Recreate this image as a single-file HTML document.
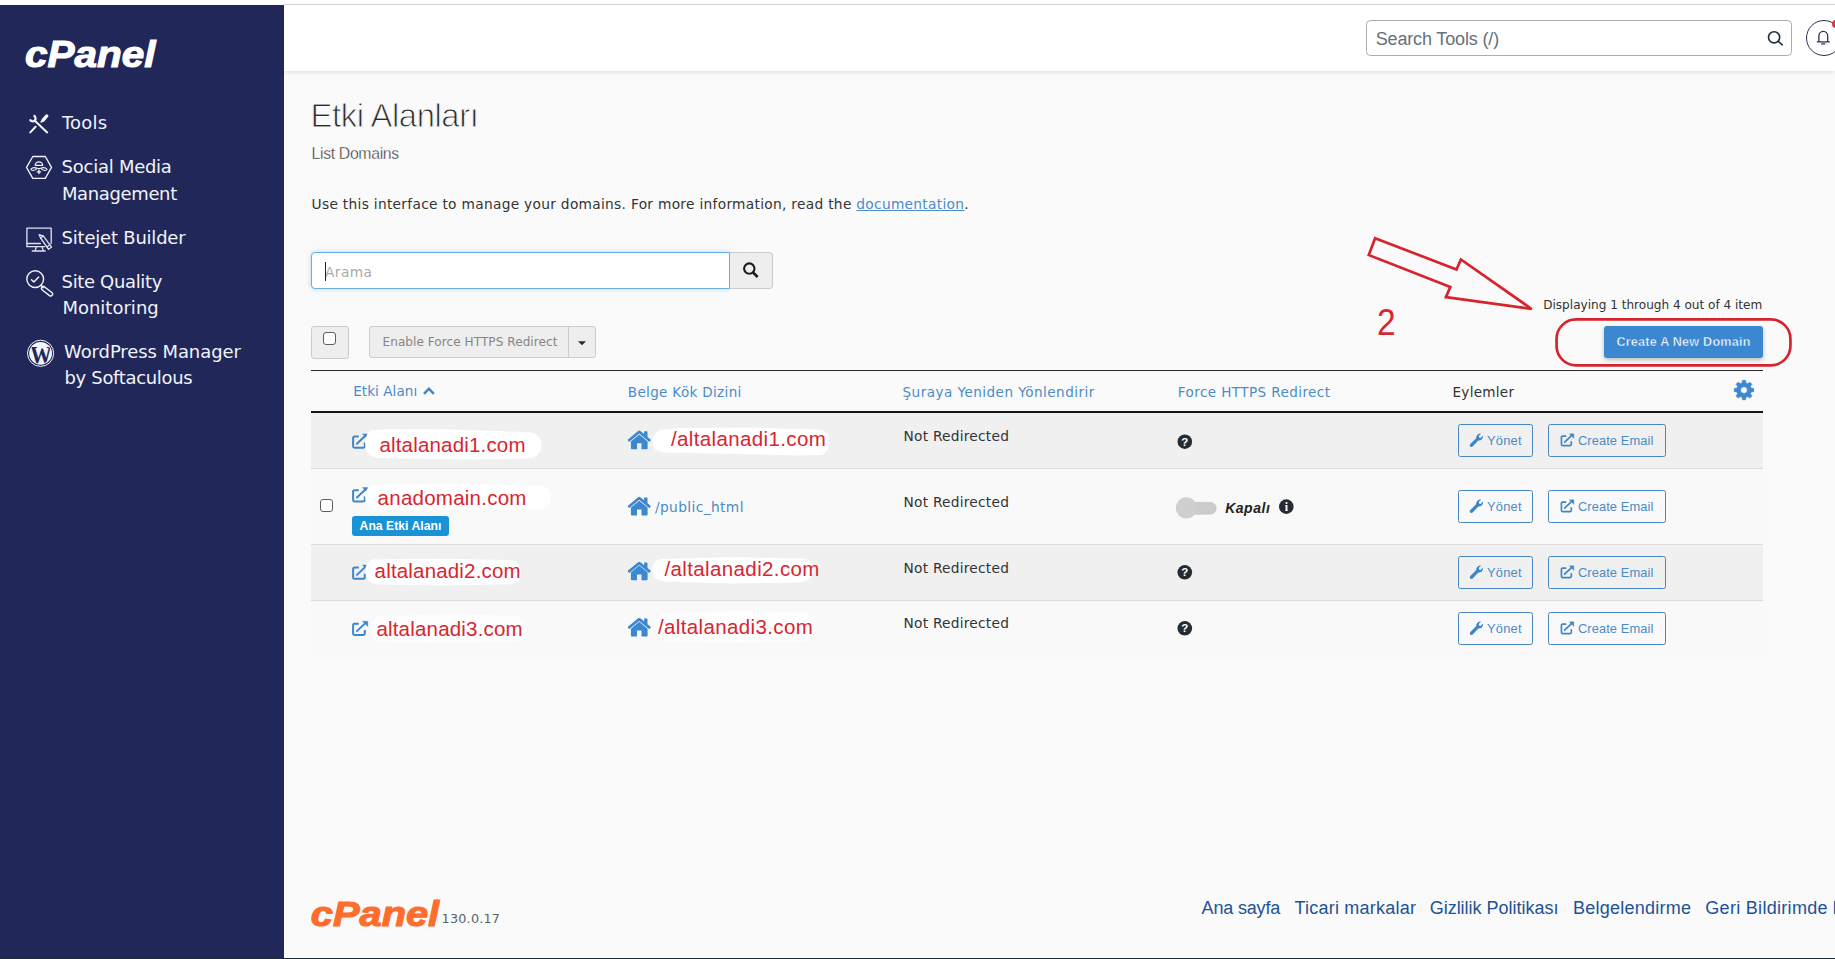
<!DOCTYPE html>
<html lang="tr">
<head>
<meta charset="utf-8">
<title>Etki Alanları - cPanel</title>
<style>
html,body{margin:0;padding:0;}
body{width:1835px;height:959px;overflow:hidden;position:relative;background:#fafafa;font-family:"Liberation Sans",sans-serif;}
.abs,.t,svg.i{position:absolute;}
.t{margin:0;line-height:1;white-space:pre;}
#topstrip{left:0;top:0;width:1835px;height:4px;background:#fff;}
#topline{left:284px;top:4px;width:1551px;height:1px;background:#d9d9d9;}
#sidebar{left:0;top:5px;width:284px;height:954px;background:#212859;}
#header{left:284px;top:5px;width:1551px;height:66px;background:#fff;box-shadow:0 1px 4px rgba(0,0,0,.13);}
#searchtools{left:1366px;top:20px;width:424px;height:34px;border:1px solid #a9acb1;border-radius:4.5px;background:#fff;}
#bell{left:1806px;top:20px;width:34px;height:34px;border:1.3px solid #2a2f55;border-radius:50%;}
#reddot{left:1832.3px;top:20.3px;width:8px;height:8px;border-radius:50%;background:#e0344a;}
#q{left:311px;top:252px;width:417px;height:35px;border:1px solid #66afe9;border-radius:4px 0 0 4px;background:#fff;box-shadow:0 0 5px rgba(102,175,233,.45);}
#caret{left:325px;top:262px;width:1px;height:19px;background:#222;}
#qbtn{left:730px;top:252px;width:42px;height:35px;border:1px solid #ccc;border-left:0;border-radius:0 4px 4px 0;background:#eee;}
#cbbtn{left:311px;top:326px;width:36px;height:31px;border:1px solid #ccc;border-radius:3px;background:#eee;}
.cb{width:11px;height:11px;border:1.2px solid #5f5f5f;border-radius:3px;background:#fff;}
#enbtn{left:369px;top:326px;width:225px;height:30px;border:1px solid #ccc;border-radius:3px;background:#eee;}
#endiv{left:568px;top:327px;width:1px;height:30px;background:#ccc;}
#crbtn{left:1604px;top:326.2px;width:159px;height:31.4px;border-radius:3px;background:#3b87d0;box-shadow:0 2px 4px rgba(0,0,0,.25);}
#ttop{left:311px;top:370px;width:1452px;height:1px;background:#2a2a2a;}
#thbot{left:311px;top:411px;width:1452px;height:2px;background:#141414;}
.row{left:311px;width:1452px;}
.sep{left:311px;width:1452px;height:1px;background:#dcdcdc;}
.btn{height:31px;border:1px solid #4686c6;border-radius:2.5px;}
#badge{left:352px;top:516px;width:97px;height:20px;border-radius:3px;background:#1a92d6;}
#botline{left:0;top:958px;width:1835px;height:1px;background:#1e2b3a;}
a.doc{color:#4a8cc7;text-decoration:underline;}
</style>
</head>
<body>
<div class="abs" id="topstrip"></div>
<div class="abs" id="topline"></div>
<div class="abs" id="header"></div>
<div class="abs" id="sidebar"></div>
<div class="abs" id="searchtools"></div>
<div class="abs" id="bell"></div>
<div class="abs" id="reddot"></div>

<div class="abs" id="q"></div>
<div class="abs" id="qbtn"></div>
<div class="abs" id="cbbtn"></div>
<div class="abs cb" style="left:323px;top:332px"></div>
<div class="abs" id="enbtn"></div>
<div class="abs" id="endiv"></div>
<div class="abs" id="crbtn"></div>

<div class="abs" id="ttop"></div>
<div class="abs" id="thbot"></div>
<div class="abs row" style="top:413px;height:55px;background:#f0f0f0"></div>
<div class="abs sep" style="top:468px"></div>
<div class="abs row" style="top:469px;height:75px;background:#f9f9f9"></div>
<div class="abs sep" style="top:544px"></div>
<div class="abs row" style="top:545px;height:55px;background:#f0f0f0"></div>
<div class="abs sep" style="top:600px"></div>
<div class="abs row" style="top:601px;height:55px;background:#f9f9f9"></div>


<div class="abs cb" style="left:319.5px;top:499px"></div>
<div class="abs" id="badge"></div>

<div class="abs btn" style="left:1458px;top:424px;width:73px"></div>
<div class="abs btn" style="left:1548px;top:424px;width:116px"></div>
<div class="abs btn" style="left:1458px;top:490px;width:73px"></div>
<div class="abs btn" style="left:1548px;top:490px;width:116px"></div>
<div class="abs btn" style="left:1458px;top:556px;width:73px"></div>
<div class="abs btn" style="left:1548px;top:556px;width:116px"></div>
<div class="abs btn" style="left:1458px;top:612px;width:73px"></div>
<div class="abs btn" style="left:1548px;top:612px;width:116px"></div>

<svg class="abs" style="left:0;top:0" width="1835" height="959" viewBox="0 0 1835 959">
<text x="25" y="67.3" font-family="Liberation Sans, sans-serif" font-size="37" font-weight="700" font-style="italic" fill="#fff" stroke="#fff" stroke-width="1.1" textLength="130.5" lengthAdjust="spacingAndGlyphs">cPanel</text>
<text x="310.8" y="926" font-family="Liberation Sans, sans-serif" font-size="35" font-weight="700" font-style="italic" fill="#ff6c2c" stroke="#ff6c2c" stroke-width="1.1" textLength="128.4" lengthAdjust="spacingAndGlyphs">cPanel</text>
<g fill="none" stroke="#f4f5fb" stroke-linecap="round" stroke-linejoin="round"><path d="M33.60 115.64 A2.9 2.9 0 1 1 29.94 119.30" stroke-width="2.2" stroke-linecap="butt"/><path d="M34.6 120.5 L47.2 132.4" stroke-width="2"/><path d="M30.3 132.4 L35.6 126.8" stroke-width="2"/><path d="M42.9 120.4 L46.8 115.9" stroke-width="3.2"/><path d="M41.3 121.9 L42.4 120.8" stroke-width="1.8"/></g>
<g fill="none" stroke="#f4f5fb" stroke-width="1.3" stroke-linejoin="round" stroke-linecap="round"><path d="M26.5 167.4 L32.8 156.5 L45.3 156.5 L51.5 167.4 L45.3 178.4 L32.8 178.4 Z"/><path d="M35.2 165.3 A3.75 3.5 0 0 1 42.7 165.3 Z" stroke-width="1.2"/><path d="M37.3 168.3 Q33 166.6 30.8 169.3 Q32.6 172.2 37.3 168.3 Z" stroke-width="1.1"/><path d="M40.6 168.3 Q44.9 166.6 47.1 169.3 Q45.3 172.2 40.6 168.3 Z" stroke-width="1.1"/><path d="M38.2 168.6 L39.7 168.6" stroke-width="1.3"/><path d="M38.95 170.2 L38.95 173.6 M37.2 171.8 L40.7 171.8" stroke-width="1.3"/></g>
<g fill="none" stroke="#dfe2f2" stroke-width="1.3" stroke-linejoin="round" stroke-linecap="round"><path d="M44.6 246.7 L26.9 246.7 L26.9 228.1 L51.2 228.1 L51.2 243.4"/><path d="M26.9 243.5 L40.4 243.5"/><path d="M36.3 247.2 L35.1 250.6 M42.1 247.2 L43.3 250.6 M32.2 251 L45.2 251"/><path d="M39.1 234.7 L40.6 238 L48.6 249.3 L51.6 247.1 L43.2 235.9 Z" fill="#212859"/><path d="M40.6 238 L43.2 235.9 M46.9 246.9 L49.8 244.7"/></g>
<g fill="none" stroke="#f4f5fb" stroke-width="1.4" stroke-linejoin="round" stroke-linecap="round"><circle cx="35.2" cy="279.1" r="8.4"/><path d="M31.4 279.7 L33.9 281.9 L38.7 276.9"/><path d="M40.9 285.5 L43.2 287.8"/><path d="M44.3 286.7 L51.8 292.5 A1.9 1.9 0 0 1 49.5 295.6 L42 289.7 A1.9 1.9 0 0 1 44.3 286.7 Z"/></g>
<defs><clipPath id="wpc"><circle cx="40.6" cy="353.3" r="10.6"/></clipPath></defs>
<circle cx="40.6" cy="353.3" r="13.1" fill="none" stroke="#f4f5fb" stroke-width="1"/>
<circle cx="40.6" cy="353.3" r="11.4" fill="#f4f5fb"/>
<text x="40.9" y="363.6" text-anchor="middle" clip-path="url(#wpc)" font-family="Liberation Serif, serif" font-weight="700" font-size="25" textLength="21.5" lengthAdjust="spacingAndGlyphs" fill="#212859">W</text>
<g fill="none" stroke="#1f2c3c" stroke-width="1.6" stroke-linecap="round"><circle cx="1774.1" cy="37.3" r="5.6"/><path d="M1778.3 41.3 L1782.2 44.8"/></g>
<g fill="none" stroke="#2a2f55" stroke-width="1.3" stroke-linecap="round" stroke-linejoin="round"><path d="M1817.3 41.8 L1829.3 41.8 M1818.9 41.6 L1818.9 36 A4.4 4.6 0 0 1 1827.7 36 L1827.7 41.6"/><path d="M1821.7 43.9 L1824.9 43.9"/></g>
<g fill="none" stroke="#1c1c1c" stroke-linecap="butt"><circle cx="749.3" cy="268.6" r="5.2" stroke-width="2.1"/><path d="M753.2 272.6 L757.6 277" stroke-width="2.7"/></g>
<path d="M578 341.2 L586 341.2 L582 345.2 Z" fill="#2b2b2b"/>
<path d="M424 393.9 L428.9 388.7 L433.8 393.9" fill="none" stroke="#3f86c8" stroke-width="2.5"/>
<path d="M1742.17 382.93 L1742.44 380.43 L1745.56 380.43 L1745.83 382.93 L1747.78 383.74 L1749.74 382.15 L1751.95 384.36 L1750.36 386.32 L1751.17 388.27 L1753.67 388.54 L1753.67 391.66 L1751.17 391.93 L1750.36 393.88 L1751.95 395.84 L1749.74 398.05 L1747.78 396.46 L1745.83 397.27 L1745.56 399.77 L1742.44 399.77 L1742.17 397.27 L1740.22 396.46 L1738.26 398.05 L1736.05 395.84 L1737.64 393.88 L1736.83 391.93 L1734.33 391.66 L1734.33 388.54 L1736.83 388.27 L1737.64 386.32 L1736.05 384.36 L1738.26 382.15 L1740.22 383.74 Z M1740.60 390.10 A3.4 3.4 0 1 0 1747.40 390.10 A3.4 3.4 0 1 0 1740.60 390.10 Z" fill="#3b87d0" fill-rule="evenodd" stroke="#3b87d0" stroke-width="0.7" stroke-linejoin="round"/>
<g transform="translate(352.0,433.7) scale(1.0)" fill="none" stroke="#3f86c8" stroke-width="2" stroke-linejoin="round"><path d="M6.8 2.8 L2.5 2.8 Q1.1 2.8 1.1 4.2 L1.1 12.6 Q1.1 14 2.5 14 L11.4 14 Q12.8 14 12.8 12.6 L12.8 8.9"/><path d="M4.9 10.1 L13.3 2.1" stroke-linecap="round"/><path d="M10.4 0.2 L15.8 0.2 L15.8 5.6 Z" fill="#3f86c8" stroke-width="0.4"/></g>
<g transform="translate(352.0,487.4) scale(1.0)" fill="none" stroke="#3f86c8" stroke-width="2" stroke-linejoin="round"><path d="M6.8 2.8 L2.5 2.8 Q1.1 2.8 1.1 4.2 L1.1 12.6 Q1.1 14 2.5 14 L11.4 14 Q12.8 14 12.8 12.6 L12.8 8.9"/><path d="M4.9 10.1 L13.3 2.1" stroke-linecap="round"/><path d="M10.4 0.2 L15.8 0.2 L15.8 5.6 Z" fill="#3f86c8" stroke-width="0.4"/></g>
<g transform="translate(352.0,564.8) scale(1.0)" fill="none" stroke="#3f86c8" stroke-width="2" stroke-linejoin="round"><path d="M6.8 2.8 L2.5 2.8 Q1.1 2.8 1.1 4.2 L1.1 12.6 Q1.1 14 2.5 14 L11.4 14 Q12.8 14 12.8 12.6 L12.8 8.9"/><path d="M4.9 10.1 L13.3 2.1" stroke-linecap="round"/><path d="M10.4 0.2 L15.8 0.2 L15.8 5.6 Z" fill="#3f86c8" stroke-width="0.4"/></g>
<g transform="translate(352.0,621.0) scale(1.0)" fill="none" stroke="#3f86c8" stroke-width="2" stroke-linejoin="round"><path d="M6.8 2.8 L2.5 2.8 Q1.1 2.8 1.1 4.2 L1.1 12.6 Q1.1 14 2.5 14 L11.4 14 Q12.8 14 12.8 12.6 L12.8 8.9"/><path d="M4.9 10.1 L13.3 2.1" stroke-linecap="round"/><path d="M10.4 0.2 L15.8 0.2 L15.8 5.6 Z" fill="#3f86c8" stroke-width="0.4"/></g>
<g fill="#fff"><path d="M371 430.5 Q365 434 365.2 444 Q365.5 456.5 378 458 L470 459.6 L528 458.6 Q541 457 541.5 445 Q541 433 528 432 L450 429.6 L385 429.6 Z"/><path d="M660 430 Q652 434 652.5 442 Q653 451 662 452.5 L740 454 L800 455.6 L822 455 Q829.5 452 829 441 Q828.5 430.5 818 429.5 L745 427.5 L680 428 Z"/><path d="M371 485.5 Q365 489 365.2 497 Q365.5 508 378 509.6 L470 510.2 L540 509.8 Q551 507 551 497 Q550.5 487 540 485.5 L470 484.2 L385 484.3 Z"/><path d="M372 559.5 Q365.2 563 365.3 571 Q365.5 583 378 584.4 L440 585.4 L512 584.2 Q521 581.5 520.8 572 Q520.5 561.5 511 560 L440 558.8 Z"/><path d="M660 559 Q652 562 652.4 570 Q653 580 663 581.5 L730 583.4 L800 582.5 Q813.5 580 813.5 570 Q813 559.5 802 558.5 L730 557.2 Z"/></g>
<g fill="#fdfdfd"><path d="M378 616 Q370 620 370.5 629 Q371 641 382 642.5 L450 643 L516 642 Q525 639 525 629 Q524.5 617 514 615.5 L450 614.2 Z"/><path d="M664 613 Q656 617 656.3 627 Q656.5 640 668 642 L740 643 L806 641.5 Q814.5 638 814.5 627 Q814 614 804 612.5 L740 610.8 Z"/></g>
<g transform="translate(627.6,430.6)" fill="#3b87d0"><path d="M11.65 3.9 L3.3 10.8 L3.3 17.6 Q3.3 18.6 4.3 18.6 L9.4 18.6 L9.4 12.7 L13.9 12.7 L13.9 18.6 L19 18.6 Q20 18.6 20 17.6 L20 10.8 Z"/><path d="M11.65 0 Q11 0 10.5 0.45 L0.35 8.9 Q-0.1 9.3 0.3 9.8 L1.2 10.9 Q1.6 11.3 2.1 10.95 L11.65 3 L21.2 10.95 Q21.7 11.3 22.1 10.9 L23 9.8 Q23.4 9.3 22.95 8.9 L19.9 6.35 L19.9 1.2 Q19.9 0.7 19.4 0.7 L17 0.7 Q16.5 0.7 16.5 1.2 L16.5 3.5 L12.8 0.45 Q12.3 0 11.65 0 Z"/></g>
<g transform="translate(627.6,496.8)" fill="#3b87d0"><path d="M11.65 3.9 L3.3 10.8 L3.3 17.6 Q3.3 18.6 4.3 18.6 L9.4 18.6 L9.4 12.7 L13.9 12.7 L13.9 18.6 L19 18.6 Q20 18.6 20 17.6 L20 10.8 Z"/><path d="M11.65 0 Q11 0 10.5 0.45 L0.35 8.9 Q-0.1 9.3 0.3 9.8 L1.2 10.9 Q1.6 11.3 2.1 10.95 L11.65 3 L21.2 10.95 Q21.7 11.3 22.1 10.9 L23 9.8 Q23.4 9.3 22.95 8.9 L19.9 6.35 L19.9 1.2 Q19.9 0.7 19.4 0.7 L17 0.7 Q16.5 0.7 16.5 1.2 L16.5 3.5 L12.8 0.45 Q12.3 0 11.65 0 Z"/></g>
<g transform="translate(627.6,561.7)" fill="#3b87d0"><path d="M11.65 3.9 L3.3 10.8 L3.3 17.6 Q3.3 18.6 4.3 18.6 L9.4 18.6 L9.4 12.7 L13.9 12.7 L13.9 18.6 L19 18.6 Q20 18.6 20 17.6 L20 10.8 Z"/><path d="M11.65 0 Q11 0 10.5 0.45 L0.35 8.9 Q-0.1 9.3 0.3 9.8 L1.2 10.9 Q1.6 11.3 2.1 10.95 L11.65 3 L21.2 10.95 Q21.7 11.3 22.1 10.9 L23 9.8 Q23.4 9.3 22.95 8.9 L19.9 6.35 L19.9 1.2 Q19.9 0.7 19.4 0.7 L17 0.7 Q16.5 0.7 16.5 1.2 L16.5 3.5 L12.8 0.45 Q12.3 0 11.65 0 Z"/></g>
<g transform="translate(627.6,617.9)" fill="#3b87d0"><path d="M11.65 3.9 L3.3 10.8 L3.3 17.6 Q3.3 18.6 4.3 18.6 L9.4 18.6 L9.4 12.7 L13.9 12.7 L13.9 18.6 L19 18.6 Q20 18.6 20 17.6 L20 10.8 Z"/><path d="M11.65 0 Q11 0 10.5 0.45 L0.35 8.9 Q-0.1 9.3 0.3 9.8 L1.2 10.9 Q1.6 11.3 2.1 10.95 L11.65 3 L21.2 10.95 Q21.7 11.3 22.1 10.9 L23 9.8 Q23.4 9.3 22.95 8.9 L19.9 6.35 L19.9 1.2 Q19.9 0.7 19.4 0.7 L17 0.7 Q16.5 0.7 16.5 1.2 L16.5 3.5 L12.8 0.45 Q12.3 0 11.65 0 Z"/></g>
<rect x="1183" y="502.3" width="33.2" height="11.9" rx="5.95" fill="#cbcbcb" stroke="#c2c2c2" stroke-width="0.6"/>
<circle cx="1186.4" cy="507.9" r="10.6" fill="#cfcfcf"/>
<circle cx="1184.8" cy="441.7" r="7.3" fill="#262a32"/>
<text x="1184.8" y="445.8" text-anchor="middle" font-family="Liberation Sans, sans-serif" font-weight="700" font-size="11.5" fill="#fff">?</text>
<circle cx="1184.8" cy="572.3" r="7.3" fill="#262a32"/>
<text x="1184.8" y="576.4" text-anchor="middle" font-family="Liberation Sans, sans-serif" font-weight="700" font-size="11.5" fill="#fff">?</text>
<circle cx="1184.8" cy="628.3" r="7.3" fill="#262a32"/>
<text x="1184.8" y="632.4" text-anchor="middle" font-family="Liberation Sans, sans-serif" font-weight="700" font-size="11.5" fill="#fff">?</text>
<circle cx="1286.3" cy="506.6" r="7.3" fill="#262a32"/>
<text x="1286.3" y="510.8" text-anchor="middle" font-family="Liberation Serif, serif" font-weight="700" font-size="12" fill="#fff">i</text>
<g transform="translate(1469.8,433.5)" fill="#3f86c8"><path d="M0.5 10.6 L6.3 4.8 A4.3 4.3 0 0 1 11.4 0.1 L8.9 2.6 L9.3 4.1 L10.8 4.5 L13.2 2.1 A4.3 4.3 0 0 1 8.6 7.1 L2.8 12.9 A1.62 1.62 0 0 1 0.5 10.6 Z"/></g>
<g transform="translate(1560.5,433.7) scale(0.845)" fill="none" stroke="#3f86c8" stroke-width="2" stroke-linejoin="round"><path d="M6.8 2.8 L2.5 2.8 Q1.1 2.8 1.1 4.2 L1.1 12.6 Q1.1 14 2.5 14 L11.4 14 Q12.8 14 12.8 12.6 L12.8 8.9"/><path d="M4.9 10.1 L13.3 2.1" stroke-linecap="round"/><path d="M10.4 0.2 L15.8 0.2 L15.8 5.6 Z" fill="#3f86c8" stroke-width="0.4"/></g>
<g transform="translate(1469.8,499.5)" fill="#3f86c8"><path d="M0.5 10.6 L6.3 4.8 A4.3 4.3 0 0 1 11.4 0.1 L8.9 2.6 L9.3 4.1 L10.8 4.5 L13.2 2.1 A4.3 4.3 0 0 1 8.6 7.1 L2.8 12.9 A1.62 1.62 0 0 1 0.5 10.6 Z"/></g>
<g transform="translate(1560.5,499.7) scale(0.845)" fill="none" stroke="#3f86c8" stroke-width="2" stroke-linejoin="round"><path d="M6.8 2.8 L2.5 2.8 Q1.1 2.8 1.1 4.2 L1.1 12.6 Q1.1 14 2.5 14 L11.4 14 Q12.8 14 12.8 12.6 L12.8 8.9"/><path d="M4.9 10.1 L13.3 2.1" stroke-linecap="round"/><path d="M10.4 0.2 L15.8 0.2 L15.8 5.6 Z" fill="#3f86c8" stroke-width="0.4"/></g>
<g transform="translate(1469.8,565.5)" fill="#3f86c8"><path d="M0.5 10.6 L6.3 4.8 A4.3 4.3 0 0 1 11.4 0.1 L8.9 2.6 L9.3 4.1 L10.8 4.5 L13.2 2.1 A4.3 4.3 0 0 1 8.6 7.1 L2.8 12.9 A1.62 1.62 0 0 1 0.5 10.6 Z"/></g>
<g transform="translate(1560.5,565.7) scale(0.845)" fill="none" stroke="#3f86c8" stroke-width="2" stroke-linejoin="round"><path d="M6.8 2.8 L2.5 2.8 Q1.1 2.8 1.1 4.2 L1.1 12.6 Q1.1 14 2.5 14 L11.4 14 Q12.8 14 12.8 12.6 L12.8 8.9"/><path d="M4.9 10.1 L13.3 2.1" stroke-linecap="round"/><path d="M10.4 0.2 L15.8 0.2 L15.8 5.6 Z" fill="#3f86c8" stroke-width="0.4"/></g>
<g transform="translate(1469.8,621.5)" fill="#3f86c8"><path d="M0.5 10.6 L6.3 4.8 A4.3 4.3 0 0 1 11.4 0.1 L8.9 2.6 L9.3 4.1 L10.8 4.5 L13.2 2.1 A4.3 4.3 0 0 1 8.6 7.1 L2.8 12.9 A1.62 1.62 0 0 1 0.5 10.6 Z"/></g>
<g transform="translate(1560.5,621.7) scale(0.845)" fill="none" stroke="#3f86c8" stroke-width="2" stroke-linejoin="round"><path d="M6.8 2.8 L2.5 2.8 Q1.1 2.8 1.1 4.2 L1.1 12.6 Q1.1 14 2.5 14 L11.4 14 Q12.8 14 12.8 12.6 L12.8 8.9"/><path d="M4.9 10.1 L13.3 2.1" stroke-linecap="round"/><path d="M10.4 0.2 L15.8 0.2 L15.8 5.6 Z" fill="#3f86c8" stroke-width="0.4"/></g>
<path d="M1375.1 238.2 L1368.8 255.1 L1450.3 287 L1445.9 297.1 L1531.7 309 L1460.9 259.5 L1456.5 269.5 Z" fill="none" stroke="#d6232d" stroke-width="2.7" stroke-linejoin="miter"/>
<rect x="1556.55" y="319.45" width="233.9" height="45.9" rx="19.5" ry="19.5" fill="none" stroke="#d6232d" stroke-width="2.7"/>
</svg>
<span class="t" style="left:61.9px;top:114.16px;font-size:17.97px;color:#f1f3fa;font-family:'DejaVu Sans','Liberation Sans',sans-serif;letter-spacing:0.234px;">Tools</span>
<span class="t" style="left:61.6px;top:157.76px;font-size:17.97px;color:#f1f3fa;font-family:'DejaVu Sans','Liberation Sans',sans-serif;letter-spacing:-0.234px;">Social Media</span>
<span class="t" style="left:61.9px;top:185.16px;font-size:17.97px;color:#f1f3fa;font-family:'DejaVu Sans','Liberation Sans',sans-serif;letter-spacing:-0.331px;">Management</span>
<span class="t" style="left:61.6px;top:229.06px;font-size:17.97px;color:#f1f3fa;font-family:'DejaVu Sans','Liberation Sans',sans-serif;letter-spacing:-0.197px;">Sitejet Builder</span>
<span class="t" style="left:61.6px;top:273.16px;font-size:17.97px;color:#f1f3fa;font-family:'DejaVu Sans','Liberation Sans',sans-serif;letter-spacing:-0.329px;">Site Quality</span>
<span class="t" style="left:62.4px;top:298.76px;font-size:17.97px;color:#f1f3fa;font-family:'DejaVu Sans','Liberation Sans',sans-serif;letter-spacing:0.034px;">Monitoring</span>
<span class="t" style="left:64.0px;top:342.96px;font-size:17.97px;color:#f1f3fa;font-family:'DejaVu Sans','Liberation Sans',sans-serif;letter-spacing:-0.060px;">WordPress Manager</span>
<span class="t" style="left:64.5px;top:368.76px;font-size:17.97px;color:#f1f3fa;font-family:'DejaVu Sans','Liberation Sans',sans-serif;letter-spacing:-0.303px;">by Softaculous</span>
<span class="t" style="left:1375.7px;top:29.86px;font-size:18px;color:#66707c;letter-spacing:-0.148px;">Search Tools (/)</span>
<span class="t" style="left:310.6px;top:99.88px;font-size:32.8px;color:#2b2b2b;letter-spacing:-0.416px;-webkit-text-stroke:0.9px #fafafa;">Etki Alanları</span>
<span class="t" style="left:311.5px;top:145.88px;font-size:15.8px;color:#333;letter-spacing:-0.328px;-webkit-text-stroke:0.35px #fafafa;">List Domains</span>
<p class="t" style="left:311.6px;top:197.85px;font-size:13.75px;color:#333;font-family:'DejaVu Sans','Liberation Sans',sans-serif;letter-spacing:0.296px;" id="intro">Use this interface to manage your domains. For more information, read the <a class="doc">documentation</a>.</p>
<span class="t" style="left:325.0px;top:266.20px;font-size:13.75px;color:#a9a9a9;font-family:'DejaVu Sans','Liberation Sans',sans-serif;letter-spacing:0.434px;">Arama</span>
<span class="t" style="left:1543.2px;top:299.14px;font-size:12.08px;color:#333;font-family:'DejaVu Sans','Liberation Sans',sans-serif;letter-spacing:-0.006px;">Displaying 1 through 4 out of 4 item</span>
<span class="t" style="left:382.5px;top:336.24px;font-size:12.08px;color:#858585;font-family:'DejaVu Sans','Liberation Sans',sans-serif;letter-spacing:0.046px;">Enable Force HTTPS Redirect</span>
<span class="t" style="left:1616.4px;top:335.98px;font-size:12.6px;color:#fff;letter-spacing:0.226px;font-weight:700;-webkit-text-stroke:0.45px #3b87d0;">Create A New Domain</span>
<span class="t" style="left:1377.2px;top:304.89px;font-size:36.4px;color:#d9252f;display:inline-block;transform:scaleX(0.92);transform-origin:0 0;">2</span>
<span class="t" style="left:353.2px;top:385.12px;font-size:13.55px;color:#4a8cc7;font-family:'DejaVu Sans','Liberation Sans',sans-serif;letter-spacing:0.059px;">Etki Alanı</span>
<span class="t" style="left:627.8px;top:386.17px;font-size:13.55px;color:#4a8cc7;font-family:'DejaVu Sans','Liberation Sans',sans-serif;letter-spacing:0.320px;">Belge Kök Dizini</span>
<span class="t" style="left:902.5px;top:386.17px;font-size:13.55px;color:#4a8cc7;font-family:'DejaVu Sans','Liberation Sans',sans-serif;letter-spacing:0.473px;">Şuraya Yeniden Yönlendirir</span>
<span class="t" style="left:1177.8px;top:386.17px;font-size:13.55px;color:#4a8cc7;font-family:'DejaVu Sans','Liberation Sans',sans-serif;letter-spacing:0.410px;">Force HTTPS Redirect</span>
<span class="t" style="left:1452.5px;top:386.17px;font-size:13.55px;color:#333;font-family:'DejaVu Sans','Liberation Sans',sans-serif;letter-spacing:0.279px;">Eylemler</span>
<span class="t" style="left:379.4px;top:434.80px;font-size:20.5px;color:#d9252f;letter-spacing:0.179px;">altalanadi1.com</span>
<span class="t" style="left:377.6px;top:487.90px;font-size:20.5px;color:#d9252f;letter-spacing:0.244px;">anadomain.com</span>
<span class="t" style="left:374.6px;top:561.15px;font-size:20.5px;color:#d9252f;letter-spacing:0.172px;">altalanadi2.com</span>
<span class="t" style="left:376.4px;top:619.00px;font-size:20.5px;color:#d9252f;letter-spacing:0.193px;">altalanadi3.com</span>
<span class="t" style="left:671.0px;top:429.20px;font-size:20.5px;color:#d9252f;letter-spacing:0.367px;">/altalanadi1.com</span>
<span class="t" style="left:654.9px;top:500.85px;font-size:13.75px;color:#4a8cc7;font-family:'DejaVu Sans','Liberation Sans',sans-serif;letter-spacing:0.399px;">/public_html</span>
<span class="t" style="left:664.5px;top:559.20px;font-size:20.5px;color:#d9252f;letter-spacing:0.374px;">/altalanadi2.com</span>
<span class="t" style="left:657.9px;top:617.10px;font-size:20.5px;color:#d9252f;letter-spacing:0.374px;">/altalanadi3.com</span>
<span class="t" style="left:359.6px;top:519.92px;font-size:12.2px;color:#fff;letter-spacing:0.015px;font-weight:700;">Ana Etki Alanı</span>
<span class="t" style="left:903.5px;top:430.15px;font-size:13.75px;color:#333;font-family:'DejaVu Sans','Liberation Sans',sans-serif;letter-spacing:0.235px;">Not Redirected</span>
<span class="t" style="left:903.5px;top:496.00px;font-size:13.75px;color:#333;font-family:'DejaVu Sans','Liberation Sans',sans-serif;letter-spacing:0.235px;">Not Redirected</span>
<span class="t" style="left:903.5px;top:562.00px;font-size:13.75px;color:#333;font-family:'DejaVu Sans','Liberation Sans',sans-serif;letter-spacing:0.235px;">Not Redirected</span>
<span class="t" style="left:903.5px;top:617.10px;font-size:13.75px;color:#333;font-family:'DejaVu Sans','Liberation Sans',sans-serif;letter-spacing:0.235px;">Not Redirected</span>
<span class="t" style="left:1225.2px;top:501.05px;font-size:14.0px;color:#222;letter-spacing:0.517px;font-weight:700;font-style:italic;">Kapalı</span>
<span class="t" style="left:1486.9px;top:434.98px;font-size:12.9px;color:#4a8cc7;letter-spacing:0.253px;">Yönet</span>
<span class="t" style="left:1577.9px;top:434.98px;font-size:12.9px;color:#4a8cc7;letter-spacing:0.089px;">Create Email</span>
<span class="t" style="left:1486.9px;top:500.98px;font-size:12.9px;color:#4a8cc7;letter-spacing:0.253px;">Yönet</span>
<span class="t" style="left:1577.9px;top:500.98px;font-size:12.9px;color:#4a8cc7;letter-spacing:0.089px;">Create Email</span>
<span class="t" style="left:1486.9px;top:566.98px;font-size:12.9px;color:#4a8cc7;letter-spacing:0.253px;">Yönet</span>
<span class="t" style="left:1577.9px;top:566.98px;font-size:12.9px;color:#4a8cc7;letter-spacing:0.089px;">Create Email</span>
<span class="t" style="left:1486.9px;top:622.98px;font-size:12.9px;color:#4a8cc7;letter-spacing:0.253px;">Yönet</span>
<span class="t" style="left:1577.9px;top:622.98px;font-size:12.9px;color:#4a8cc7;letter-spacing:0.089px;">Create Email</span>
<span class="t" style="left:441.6px;top:912.85px;font-size:12.77px;color:#5a626b;font-family:'DejaVu Sans','Liberation Sans',sans-serif;letter-spacing:0.217px;">130.0.17</span>
<span class="t" style="left:1201.6px;top:898.81px;font-size:18px;color:#1d5396;letter-spacing:-0.170px;">Ana sayfa</span>
<span class="t" style="left:1294.4px;top:898.81px;font-size:18px;color:#1d5396;letter-spacing:0.231px;">Ticari markalar</span>
<span class="t" style="left:1429.7px;top:898.81px;font-size:18px;color:#1d5396;letter-spacing:-0.018px;">Gizlilik Politikası</span>
<span class="t" style="left:1573.1px;top:898.81px;font-size:18px;color:#1d5396;letter-spacing:0.243px;">Belgelendirme</span>
<span class="t" style="left:1705.3px;top:898.81px;font-size:18px;color:#1d5396;letter-spacing:0.298px;">Geri Bildirimde</span>
<span class="t" style="left:1832.4px;top:898.81px;font-size:18px;color:#1d5396;">Bulun</span>
<div class="abs" id="caret"></div>
<div class="abs" id="botline"></div>
</body>
</html>
